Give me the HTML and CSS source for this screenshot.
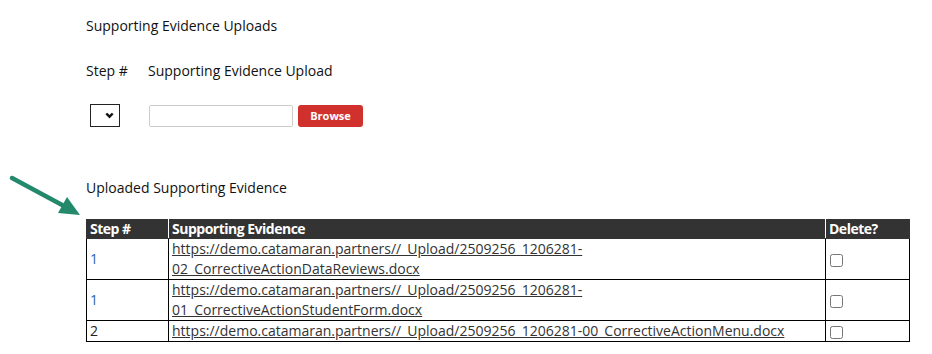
FILE: index.html
```html
<!DOCTYPE html>
<html lang="en">
    <head>
        <meta charset="UTF-8">
        <meta name="viewport" content="width=device-width, initial-scale=1.0">
        <title>Supporting Evidence</title>
        <link rel="stylesheet" href="styles.css">
    </head>
    <body>
        <div id="idPagina">
            <!-- seta de destaque -->
            <svg class="clSeta" width="90" height="60" viewBox="0 0 90 60">
                <line x1="12" y1="10" x2="64" y2="38" stroke="#23896a" stroke-width="4.5" stroke-linecap="round"/>
                <polygon points="80,47 58,45 67,29" fill="#23896a"/>
            </svg>

            <h3 class="clTitulo">Supporting Evidence Uploads</h3>

            <div class="clGrade">
                <span>Step #</span>
                <span>Supporting Evidence Upload</span>
            </div>

            <div class="clGrade clLinhaForm">
                <div class="clSelect">
                    <select name="nmStep" id="idStep">
                        <option value=""></option>
                        <option value="1">1</option>
                        <option value="2">2</option>
                    </select>
                    <svg class="clChevron" width="9" height="7" viewBox="0 0 9 7">
                        <polyline points="1.3,1.5 4.5,4.7 7.7,1.5" fill="none" stroke="#111" stroke-width="2.4"/>
                    </svg>
                </div>
                <div class="clArquivo">
                    <input type="text" id="idArquivo">
                    <button type="button" id="idBrowse">Browse</button>
                </div>
            </div>

            <h3 class="clTitulo clTituloTabela">Uploaded Supporting Evidence</h3>

            <table class="clTabela">
                <colgroup>
                    <col class="clColStep">
                    <col>
                    <col class="clColDelete">
                </colgroup>
                <thead>
                    <tr>
                        <th>Step #</th>
                        <th>Supporting Evidence</th>
                        <th>Delete?</th>
                    </tr>
                </thead>
                <tbody>
                    <tr>
                        <td class="clStep">1</td>
                        <td><a href="#">https://demo.catamaran.partners//_Upload/2509256_1206281-02_CorrectiveActionDataReviews.docx</a></td>
                        <td class="clDelete"><input type="checkbox"></td>
                    </tr>
                    <tr>
                        <td class="clStep">1</td>
                        <td><a href="#">https://demo.catamaran.partners//_Upload/2509256_1206281-01_CorrectiveActionStudentForm.docx</a></td>
                        <td class="clDelete"><input type="checkbox"></td>
                    </tr>
                    <tr>
                        <td class="clStep clStepEscuro">2</td>
                        <td><a href="#">https://demo.catamaran.partners//_Upload/2509256_1206281-00_CorrectiveActionMenu.docx</a></td>
                        <td class="clDelete"><input type="checkbox"></td>
                    </tr>
                </tbody>
            </table>
        </div>
    </body>
</html>
```

FILE: styles.css
```css
*{
    margin: 0px;
    padding: 0px;
    box-sizing: border-box;
}
body{
    background: #fff;
    font-family: "Open Sans", "Liberation Sans", sans-serif;
    font-size: 14px;
    line-height: 20px;
    color: #111;
}
#idPagina{
    position: relative;
    padding: 16px 0 0 86px;
    width: 910px;
}
.clSeta{
    position: absolute;
    left: 0px;
    top: 168px;
}
.clTitulo{
    font-size: 14px;
    font-weight: normal;
    line-height: 20px;
}
.clGrade{
    display: grid;
    grid-template-columns: 62px auto;
    margin-top: 25px;
}
.clLinhaForm{
    margin-top: 23px;
    align-items: center;
}
.clSelect{
    position: relative;
    width: 30px;
    height: 23px;
    margin-left: 4px;
}
.clSelect select{
    display: block;
    appearance: none;
    width: 30px;
    height: 23px;
    border: 1px solid #222;
    border-radius: 0px;
    background: #fff;
}
.clChevron{
    position: absolute;
    right: 6px;
    top: 8px;
    pointer-events: none;
}
.clArquivo{
    display: flex;
    gap: 5px;
    margin-left: 1px;
}
.clArquivo input{
    width: 144px;
    height: 22px;
    border: 1px solid #ccc;
    border-radius: 2px;
}
.clArquivo button{
    width: 65px;
    height: 22px;
    background: #d0312d;
    color: #fff;
    border: none;
    border-radius: 3px;
    font-family: "Open Sans", "Liberation Sans", sans-serif;
    font-size: 11px;
    font-weight: bold;
}
.clTituloTabela{
    margin-top: 51px;
}
.clTabela{
    margin-top: 21px;
    width: 824px;
    table-layout: fixed;
    border-collapse: collapse;
}
.clColStep{
    width: 82px;
}
.clColDelete{
    width: 84px;
}
.clTabela th{
    background: #333;
    color: #fff;
    font-weight: bold;
    letter-spacing: -0.5px;
    text-align: left;
    padding: 0px 3px;
    height: 19px;
    line-height: 18px;
    border: 1px solid #333;
    border-right-color: #fff;
}
.clTabela th:last-child{
    border-right-color: #333;
}
.clTabela td{
    border: 1px solid #000;
    padding: 0px 3px;
    vertical-align: middle;
}
.clStep{
    color: #2a63b0;
}
.clStepEscuro{
    color: #222;
}
.clTabela a{
    color: #333;
}
.clDelete input{
    width: 13px;
    height: 13px;
    margin: 3px 0px 2px 1px;
    vertical-align: middle;
}
```
